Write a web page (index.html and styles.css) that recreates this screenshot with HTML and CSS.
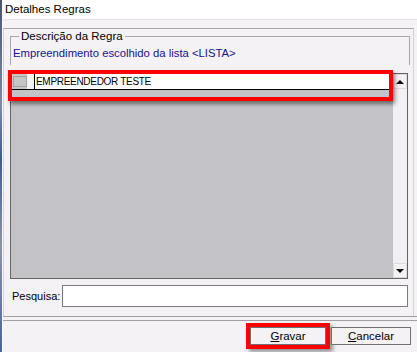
FILE: index.html
```html
<!DOCTYPE html>
<html lang="pt">
<head>
    <meta charset="UTF-8">
    <title>Detalhes Regras</title>
    <link rel="stylesheet" href="styles.css">
</head>
<body>
    <div class="window">
        <div class="edge"></div>
        <div class="main">
            <div class="titlebar">Detalhes Regras</div>

            <div class="panel">
                <fieldset class="groupbox">
                    <legend>Descrição da Regra</legend>
                    <div class="desc">Empreendimento escolhido da lista &lt;LISTA&gt;</div>
                </fieldset>

                <div class="grid">
                    <div class="grid-body">
                        <div class="grid-row">
                            <div class="check-cell"><span class="check"></span></div>
                            <div class="text-cell">EMPREENDEDOR TESTE</div>
                        </div>
                    </div>
                    <div class="scrollbar">
                        <div class="scroll-btn"><span class="arrow-up"></span></div>
                        <div class="scroll-track"></div>
                        <div class="scroll-btn"><span class="arrow-down"></span></div>
                    </div>
                    <div class="mark mark-row"></div>
                </div>

                <div class="search-row">
                    <label for="pesquisa">Pesquisa:</label>
                    <input type="text" id="pesquisa">
                </div>
            </div>

            <div class="separator"></div>

            <div class="buttons">
                <button class="btn btn-marked"><u>G</u>ravar</button>
                <button class="btn"><u>C</u>ancelar</button>
            </div>
        </div>
    </div>
</body>
</html>
```

FILE: styles.css
```css
body {
    margin: 0;
    font-family: 'Liberation Sans', Arial, sans-serif;
    font-size: 11px;
    color: #000;
    background: #f5f2f5;
}
.window {
    display: flex;
    width: 417px;
    height: 352px;
    overflow: hidden;
}
.edge {
    width: 3px;
    flex-shrink: 0;
    background: linear-gradient(180deg, #4a5670 0%, #7d8aa6 30%, #3f5a9a 45%, #8c93a5 70%, #4b62a8 100%);
    border-right: 1px solid #fdfcfd;
    box-sizing: border-box;
}
.main {
    flex: 1;
    display: flex;
    flex-direction: column;
}
.titlebar {
    height: 19px;
    line-height: 18px;
    padding-left: 2px;
    font-size: 11.5px;
    background: #fff;
    border-bottom: 1px solid #e6e3e6;
}
.panel {
    margin-top: 8px;
    height: 288px;
    box-sizing: border-box;
    border-top: 1px solid #a8a6a8;
    border-left: 1px solid #d4d2d4;
    border-right: 1px solid #d4d2d4;
    margin-right: 3px;
    padding: 0 5px 0 6px;
    display: flex;
    flex-direction: column;
}
.groupbox {
    margin: 0 -2px 0 0;
    padding: 0 2px 4px;
    border: 1px solid #a8a6a8;
    border-bottom: none;
    min-width: 0;
}
.groupbox legend {
    padding: 0 2px;
    margin-left: 6px;
    line-height: 14px;
    font-size: 11.5px;
}
.desc {
    color: #14148c;
    font-size: 11.3px;
    line-height: 15px;
    padding-top: 3px;
}
.grid {
    position: relative;
    margin-top: 8px;
    height: 206px;
    box-sizing: border-box;
    border: 1px solid #646464;
    display: flex;
}
.grid-body {
    flex: 1;
    background: #c3c2c6;
}
.grid-row {
    display: flex;
    height: 16px;
    border-bottom: 1px solid #000;
    box-sizing: border-box;
    margin-right: 2px;
}
.check-cell {
    width: 24px;
    border-right: 1px solid #000;
    display: flex;
    align-items: center;
    padding-left: 2px;
    box-sizing: border-box;
    background: linear-gradient(90deg, #c8c8c8 0, #c8c8c8 16px, #f4f4f4 16px);
}
.check {
    width: 12px;
    height: 9px;
    border: 1px solid #a0a0a0;
    background: #c6c6c6;
}
.text-cell {
    flex: 1;
    background: #fff;
    border-right: 1px solid #000;
    padding-left: 1px;
    font-size: 10px;
    letter-spacing: -0.3px;
    line-height: 15px;
}
.scrollbar {
    width: 14px;
    background: #f2f0f4;
    display: flex;
    flex-direction: column;
}
.scroll-btn {
    height: 15px;
    background: #f4f2f4;
    border: 1px solid #dcdadc;
    box-sizing: border-box;
    display: flex;
    align-items: center;
    justify-content: center;
}
.scroll-track {
    flex: 1;
}
.arrow-up {
    border-left: 4px solid transparent;
    border-right: 4px solid transparent;
    border-bottom: 4px solid #000;
}
.arrow-down {
    border-left: 4px solid transparent;
    border-right: 4px solid transparent;
    border-top: 4px solid #000;
}
.mark {
    border: 4px solid #f00;
    box-shadow: 2px 3px 4px rgba(0, 0, 0, 0.45);
}
.mark-row {
    position: absolute;
    left: -3px;
    top: -4px;
    width: 377px;
    height: 23px;
}
.search-row {
    display: flex;
    align-items: center;
    margin-top: 6px;
}
.search-row label {
    margin-left: 2px;
    margin-right: 2px;
}
.search-row input {
    flex: 1;
    height: 22px;
    box-sizing: border-box;
    border: 1px solid #7a7a7a;
    background: #fff;
    margin: 0;
    font: inherit;
}
.separator {
    height: 5px;
    box-sizing: border-box;
    border-top: 1px solid #a0a0a0;
    border-bottom: 1px solid #a0a0a0;
}
.buttons {
    display: flex;
    justify-content: flex-end;
    gap: 5px;
    padding: 6px 6px 0 0;
}
.btn {
    height: 18px;
    box-sizing: border-box;
    border: 1px solid #707070;
    background: #f4f2f4;
    font: inherit;
    font-size: 11.5px;
    padding: 0;
    line-height: 16px;
    color: #000;
}
.btn:first-child {
    width: 76px;
}
.btn:last-child {
    width: 80px;
}
.btn-marked {
    box-shadow: 0 0 0 4px #f00, 3px 3px 4px 4px rgba(0, 0, 0, 0.4);
}
```
